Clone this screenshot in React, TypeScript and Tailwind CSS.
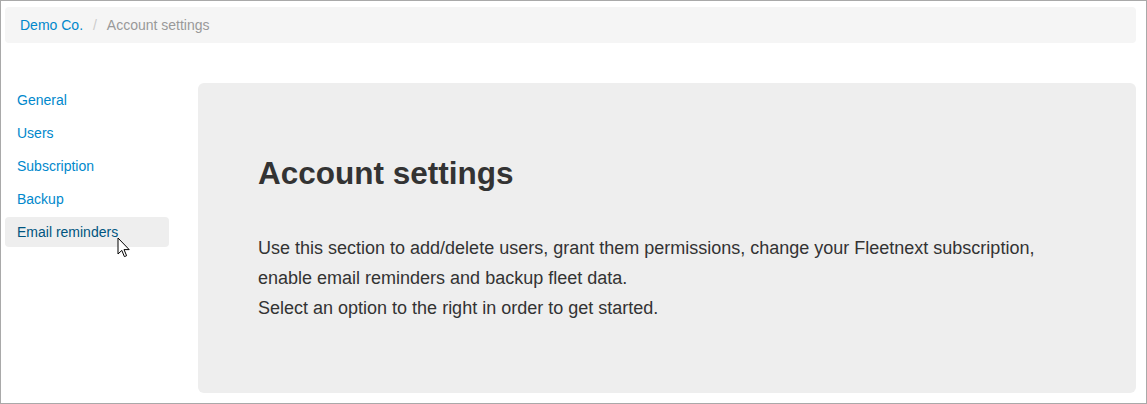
import React from "react";

const items = ["General", "Users", "Subscription", "Backup", "Email reminders"];

export default function App() {
  return (
    <div
      className="relative w-[1147px] h-[404px] border border-[#a9a9a9] bg-white pl-[4px] pr-[10px] pt-[6px] overflow-hidden"
      style={{ fontFamily: '"Liberation Sans", Arial, sans-serif' }}
    >
      <div className="h-[36px] rounded-[4px] bg-[#f5f5f5] px-[15px] py-[8px] text-[14px] leading-[20px] flex items-center">
        <span className="text-[#0088cc]">Demo Co.</span>
        <span className="text-[#cccccc] ml-[5px] pl-[5px] pr-[6px]">/&nbsp;</span>
        <span className="text-[#999999]">Account settings</span>
      </div>
      <div className="flex mt-[40px]">
        <div className="w-[164px] pt-[2px] flex flex-col gap-[3px] shrink-0">
          {items.map((it, i) => (
            <div
              key={it}
              className={
                "h-[30px] rounded-[4px] px-[12px] py-[5px] text-[14px] leading-[20px] " +
                (i === 4 ? "bg-[#eeeeee] text-[#005580]" : "text-[#0088cc]")
              }
            >
              {it}
            </div>
          ))}
        </div>
        <div className="ml-[29px] flex-1 h-[310px] rounded-[6px] bg-[#eeeeee] pl-[60px] pr-[40px] pt-[73px] text-[#333333]">
          <h1 className="text-[31.5px] leading-[34.65px] font-bold m-0">Account settings</h1>
          <p className="mt-[42.8px] text-[18px] leading-[30px]">
            Use this section to add/delete users, grant them permissions, change your Fleetnext subscription,
            <br />
            enable email reminders and backup fleet data.
            <br />
            Select an option to the right in order to get started.
          </p>
        </div>
      </div>
      <svg
        className="absolute left-[116px] top-[236px]"
        width="14"
        height="22"
        viewBox="0 0 14 22"
      >
        <path
          d="M1 1 L1 17 L4.8 13.4 L7.4 19.6 L9.6 18.7 L7 12.6 L12.2 12.6 Z"
          fill="#ffffff"
          stroke="#000000"
          strokeWidth="1"
          strokeLinejoin="miter"
        />
      </svg>
    </div>
  );
}
